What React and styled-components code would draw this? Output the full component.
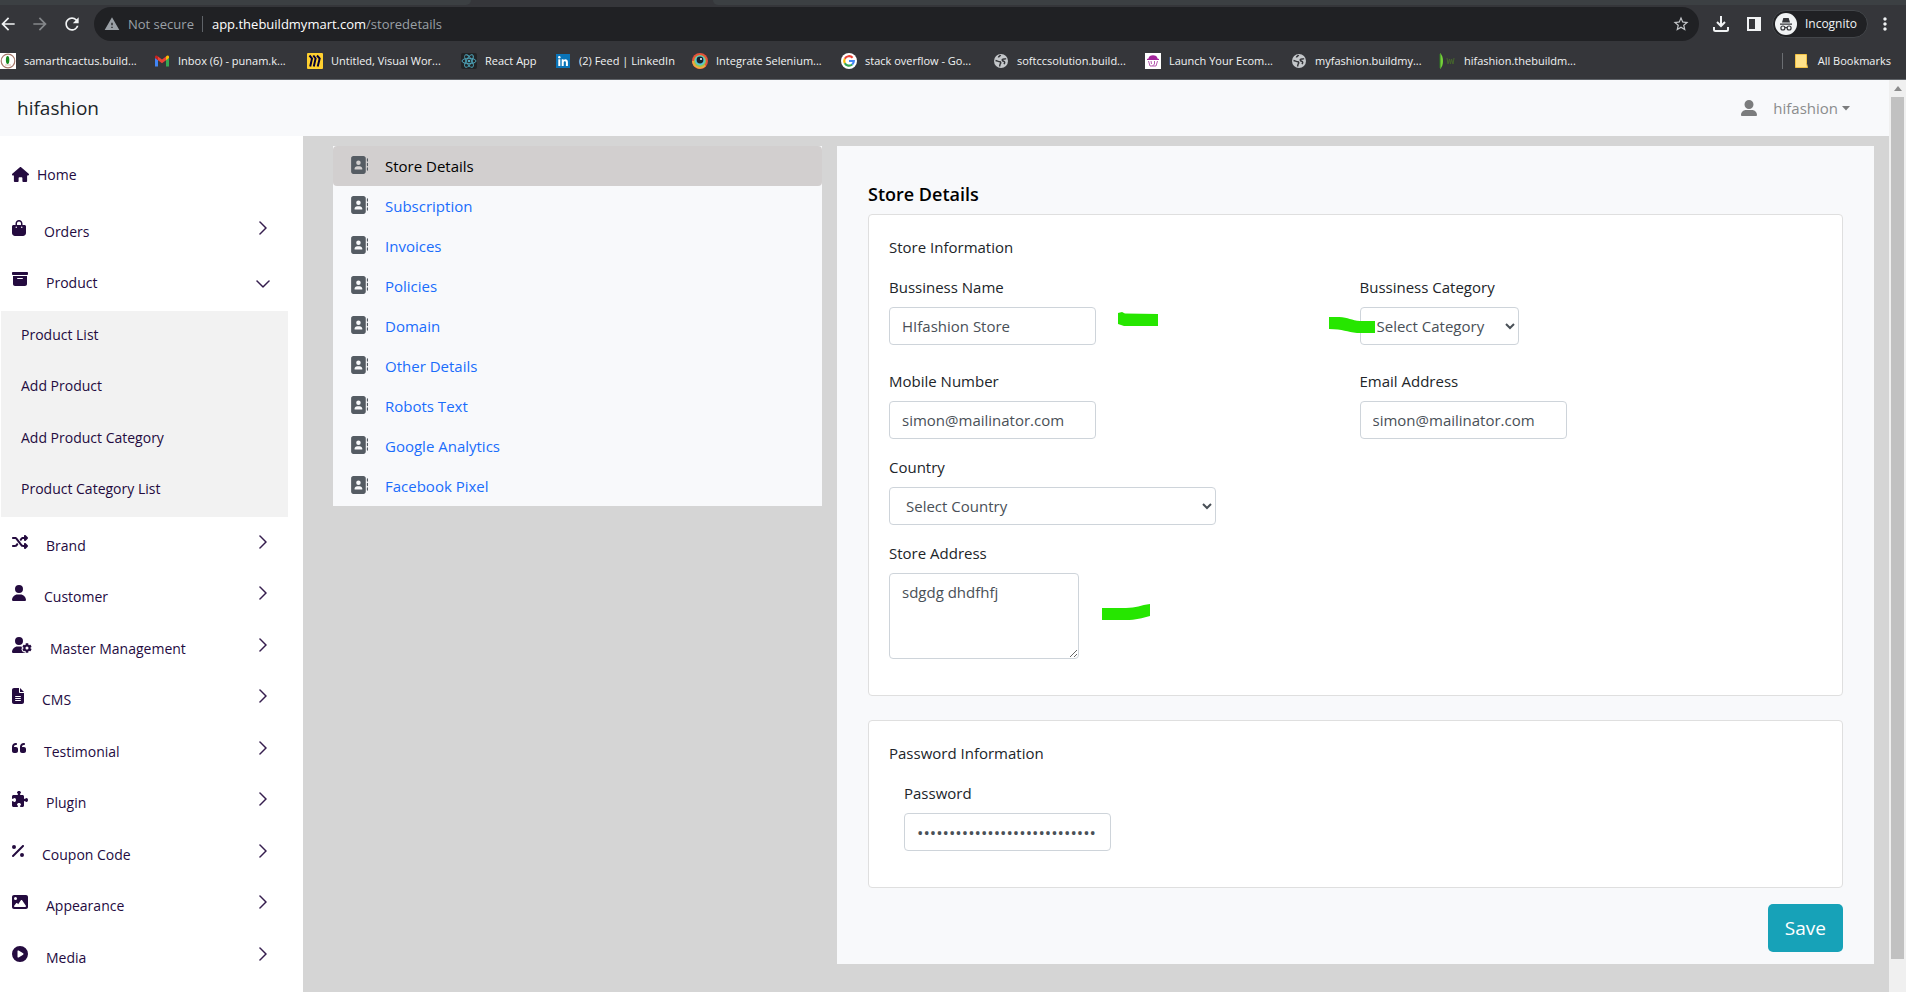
import * as React from 'react';
import styled, { createGlobalStyle } from 'styled-components';
import {
  FaAddressBook,
  FaBagShopping,
  FaBoxArchive,
  FaCirclePlay,
  FaFileLines,
  FaHouse,
  FaImage,
  FaPercent,
  FaPuzzlePiece,
  FaQuoteLeft,
  FaShuffle,
  FaUser,
  FaUserGear,
  FaUserLarge,
} from 'react-icons/fa6';
import { BsChevronDown, BsChevronRight } from 'react-icons/bs';
import {
  MdArrowBack,
  MdArrowForward,
  MdMoreVert,
  MdPublic,
  MdRefresh,
  MdStarBorder,
  MdWarning,
} from 'react-icons/md';

const GlobalStyle = createGlobalStyle`
  *, *::before, *::after {
    box-sizing: border-box;
  }

  body {
    margin: 0;
    font-family: 'Open Sans', 'Noto Sans', sans-serif;
    font-size: 15px;
    line-height: 24px;
    color: #212529;
    background: #d5d5d5;
  }

  button, input, select, textarea {
    font: inherit;
  }

  a {
    text-decoration: none;
  }

  svg {
    display: block;
    flex: none;
  }
`;

const Window = styled.div`
  display: flex;
  flex-direction: column;
  min-height: 100vh;
`;

/* ---- browser bars ---- */

const TabStrip = styled.div`
  display: flex;
  justify-content: space-between;
  height: 5px;
  background: #35363a;
`;

const TabEdge = styled.div`
  flex: ${p => p.$grow} 1 0;
  background: #3c4043;
  border-radius: ${p => (p.$left ? '0 0 6px 0' : '0 0 0 6px')};
`;

const ActiveTab = styled.div`
  flex: 242 1 0;
`;

const Toolbar = styled.div`
  display: flex;
  align-items: center;
  height: 42px;
  padding: 0 8px 4px 0;
  background: #35363a;
  color: #f1f3f4;
`;

const ToolButton = styled.button`
  display: flex;
  align-items: center;
  justify-content: center;
  flex: none;
  width: ${p => p.$width || 32}px;
  height: 32px;
  padding: 0;
  border: 0;
  background: none;
  color: ${p => (p.$dim ? '#85888b' : '#f1f3f4')};
`;

const NavButtons = styled.div`
  display: flex;
  margin-left: -8px;
  width: 102px;
`;

const AddressBar = styled.div`
  display: flex;
  align-items: center;
  flex: 1;
  height: 34px;
  padding: 0 2px 0 10px;
  border-radius: 17px;
  background: #202124;
  font-size: 13px;
  color: #9aa0a6;
`;

const SecurityText = styled.span`
  margin-left: 8px;
  padding-right: 8px;
  border-right: 1px solid #5f6368;
  line-height: 16px;
`;

const Url = styled.span`
  flex: 1;
  margin-left: 9px;
`;

const Host = styled.span`
  color: #fff;
`;

const Incognito = styled.button`
  display: flex;
  align-items: center;
  gap: 8px;
  height: 28px;
  margin: 0 4px 0 7px;
  padding: 0 10px 0 2px;
  border: 1px solid #43464a;
  border-radius: 14px;
  background: #202124;
  color: #f1f3f4;
  font-size: 12px;
`;

const BookmarkBar = styled.nav`
  display: flex;
  align-items: center;
  gap: 16px;
  height: 33px;
  padding: 0 15px 4px 0;
  border-bottom: 1px solid #5f6368;
  background: #35363a;
`;

const Bookmark = styled.a`
  display: flex;
  align-items: center;
  gap: 8px;
  min-width: ${p => p.$width || 0}px;
  font-size: 11px;
  white-space: nowrap;
  color: #f1f3f4;
`;

const AllBookmarks = styled(Bookmark)`
  gap: 10px;
  margin-left: auto;
  padding-left: 12px;
  border-left: 1px solid #6b6e72;
  line-height: 16px;
`;

/* ---- page frame ---- */

const Viewport = styled.div`
  display: flex;
  flex: 1;
`;

const Page = styled.div`
  display: flex;
  flex-direction: column;
  flex: 1;
  min-width: 0;
`;

const ScrollTrack = styled.div`
  display: flex;
  flex-direction: column;
  align-items: center;
  width: 17px;
  background: #f0f0f0;

  &::after {
    content: '';
    flex: 33 1 0;
  }
`;

const ScrollArrow = styled.div`
  display: flex;
  align-items: center;
  height: 17px;
`;

const ScrollThumb = styled.div`
  flex: 862 1 0;
  width: 13px;
  background: #c1c1c1;
`;

const Header = styled.header`
  display: flex;
  align-items: center;
  justify-content: space-between;
  height: 56px;
  padding: 0 39px 0 17px;
  background: #f8f9fb;
`;

const BrandLink = styled.a`
  font-size: 19px;
  color: #212529;
`;

const UserMenu = styled.button`
  display: flex;
  align-items: center;
  padding: 0;
  border: 0;
  background: none;
  color: #7b7c7d;
`;

const UserName = styled.span`
  margin: 0 4px 0 16px;
  color: #8b8c8d;
`;

const Body = styled.div`
  display: flex;
  flex: 1;
`;

/* ---- sidebar ---- */

const Sidebar = styled.nav`
  flex: none;
  width: 303px;
  padding: 10px 15px 0 1px;
  background: #fff;
  font-size: 14px;
`;

const Menu = styled.ul`
  margin: 0;
  padding: 0;
  list-style: none;
`;

const MenuRow = styled.a`
  display: flex;
  align-items: center;
  height: 51px;
  padding: 0 17px 2px 11px;
  color: #240b3f;

  li:nth-child(even) > & {
    height: 52px;
  }
`;

const HomeRow = styled(MenuRow)`
  gap: 8px;
  height: 57px;
  padding-bottom: 0;
`;

// Font Awesome glyphs differ in width, only the height is shared
const MenuIcon = styled.span`
  width: ${p => p.$width}px;

  svg {
    width: 100%;
    height: 16px;
  }
`;

const MenuText = styled.span`
  flex: 1;
  margin-left: 18px;
  padding-top: 8px;
`;

const OpenChevron = styled(BsChevronDown)`
  align-self: flex-end;
  margin-bottom: 12px;
`;

const Submenu = styled(Menu)`
  margin-top: 5px;
  background: #f2f2f2;
`;

const SubmenuRow = styled(MenuRow)`
  padding: 0 16px 4px 20px;
`;

/* ---- settings ---- */

const Main = styled.main`
  display: grid;
  grid-template-columns: 489fr 1037fr;
  gap: 15px;
  align-items: start;
  flex: 1;
  padding: 10px 15px 28px 30px;
  background: #d5d5d5;
`;

const SettingsNav = styled.nav`
  background: #f8f9fb;
`;

const SettingsLink = styled.a`
  display: flex;
  align-items: center;
  gap: 17px;
  height: 40px;
  padding: 0 17px;
  border-radius: 4px;
  background: ${p => (p.$active ? '#d2cfcf' : 'none')};
  color: ${p => (p.$active ? '#000' : '#1a6dfb')};

  svg {
    margin-bottom: 2px;
    color: #555c63;
  }
`;

const Panel = styled.form`
  padding: 36px 31px 12px;
  background: #f8f9fb;
`;

const Title = styled.h1`
  margin: 0 0 8px;
  font-size: 18px;
  font-weight: 600;
  line-height: 24px;
  color: #000;
`;

const Card = styled.section`
  margin-bottom: ${p => (p.$last ? 16 : 24)}px;
  padding: 20px;
  border: 1px solid #dfdfdf;
  border-radius: 4px;
  background: #fff;
`;

const CardTitle = styled.h2`
  margin: 0 0 16px;
  font-size: 15px;
  font-weight: 400;
  line-height: 24px;
`;

const FieldRow = styled.div`
  display: grid;
  grid-template-columns: 1fr 1fr;
  gap: 8px;
  margin-bottom: ${p => (p.$loose ? 24 : 16)}px;
  padding-left: ${p => (p.$inset ? 15 : 0)}px;
`;

const Field = styled.div`
  display: flex;
  flex-direction: column;
  align-items: flex-start;
  gap: 8px;
`;

const Control = styled.div`
  position: relative;
  display: flex;
`;

const Input = styled.input`
  width: ${p => p.$width || 207}px;
  height: 38px;
  padding: 6px 12px;
  border: 1px solid #ced4da;
  border-radius: 4px;
  background: #fff;
  color: #495057;

  &[type='password'] {
    font-size: 17px;
  }
`;

const Select = styled(Input).attrs({ as: 'select' })``;

const TextArea = styled(Input).attrs({ as: 'textarea' })`
  height: 86px;
`;

/* highlighter strokes laid over the form */
const Marker = styled.svg`
  position: absolute;
  left: ${p => p.$left}px;
  top: ${p => p.$top}px;
  fill: #26e600;
  pointer-events: none;
`;

const Actions = styled.div`
  display: flex;
  justify-content: flex-end;
`;

const SaveButton = styled.button`
  height: 48px;
  padding: 0 17px;
  border: 0;
  border-radius: 5px;
  background: #17a2b8;
  color: #fff;
  font-size: 19px;
`;

/* ---- favicons ---- */

const CactusIcon = () => (
  <svg width="16" height="16" viewBox="0 0 16 16">
    <path fill="#fff" d="M0 0h16v16H0z" />
    <circle cx="8" cy="8" r="6.8" fill="#fff" stroke="#a5796b" strokeWidth="1.2" />
    <ellipse cx="7.6" cy="7" rx="1.7" ry="4" fill="#188a20" />
    <path d="M5 12h6" stroke="#d9b8ad" />
  </svg>
);

const GmailIcon = () => (
  <svg width="16" height="16" viewBox="0 0 16 16">
    <path fill="#4285f4" d="M1 13.5h3V7L1 4.7z" />
    <path fill="#34a853" d="M12 13.5h3V4.7L12 7z" />
    <path fill="#ea4335" d="M4 3.4l4 3 4-3V7.2l-4 3-4-3z" />
    <path fill="#c5221f" d="M1 4c0-1.6 1.7-2 3-.6v3.8L1 5z" />
    <path fill="#fbbc04" d="M15 4c0-1.6-1.7-2-3-.6v3.8L15 5z" />
  </svg>
);

const MiroIcon = () => (
  <svg width="16" height="16" viewBox="0 0 16 16">
    <rect width="16" height="16" rx="1" fill="#ffd02f" />
    <path
      d="M2.5 2.5L5 5.5 3.2 13.5M6.3 2.5L8.6 5.5 6.8 13.5M10 2.5l2.7 3-2 8"
      fill="none"
      stroke="#050038"
      strokeWidth="2"
    />
  </svg>
);

const ReactIcon = () => (
  <svg width="16" height="16" viewBox="0 0 16 16">
    <rect width="16" height="16" rx="2" fill="#222426" />
    <g fill="none" stroke="#4fa9bf" strokeWidth="0.9">
      <ellipse cx="8" cy="8" rx="7" ry="2.7" />
      <ellipse cx="8" cy="8" rx="7" ry="2.7" transform="rotate(60 8 8)" />
      <ellipse cx="8" cy="8" rx="7" ry="2.7" transform="rotate(120 8 8)" />
    </g>
    <circle cx="8" cy="8" r="1.3" fill="#4fa9bf" />
  </svg>
);

const LinkedInIcon = () => (
  <svg width="16" height="16" viewBox="0 0 16 16">
    <path fill="#0a74b8" d="M1 1h14v14H1z" />
    <circle cx="4.3" cy="4.2" r="1.2" fill="#fff" />
    <path fill="#fff" d="M3.3 6.3h2V13h-2zM6.7 6.3h1.9v1c1-1.7 4.3-1.6 4.3 1.6V13h-2V9.6c0-2-2.2-1.8-2.2 0V13h-2z" />
  </svg>
);

const SeleniumIcon = () => (
  <svg width="16" height="16" viewBox="0 0 16 16">
    <circle cx="8" cy="8" r="8" fill="#e5533c" />
    <path fill="#f2a541" d="M0 8a8 8 0 0014 5L8 8z" />
    <circle cx="8" cy="8" r="6" fill="#9ac54b" />
    <circle cx="8" cy="7.5" r="5" fill="#58c3d6" />
    <circle cx="8" cy="7" r="3.4" fill="#15202b" />
    <circle cx="9" cy="6" r="1" fill="#fff" />
  </svg>
);

const GoogleIcon = () => (
  <svg width="16" height="16" viewBox="0 0 16 16">
    <circle cx="8" cy="8" r="8" fill="#fff" />
    <g fill="none" strokeWidth="2.2">
      <path stroke="#ea4335" d="M11.6 4.8A4.8 4.8 0 003.8 5.8" />
      <path stroke="#fbbc04" d="M3.8 5.8a4.8 4.8 0 000 4.5" />
      <path stroke="#34a853" d="M3.8 10.2a4.8 4.8 0 007.4 1.3" />
      <path stroke="#4285f4" d="M11.2 11.5A4.8 4.8 0 0012.8 8H8" />
    </g>
  </svg>
);

// world map disc, land masses punched out of the light circle
const GlobeIcon = () => (
  <svg width="16" height="16" viewBox="0 0 16 16">
    <circle cx="8" cy="8" r="7" fill="#c4c7ca" />
    <path
      d="M2.500 7.500c2 .5 3 1 4.500 1.200.8.300 1 1.300.3 2-.5.600-.3 1.800-.8 2.800M13 5.500c-1 1-2.500 0-3.500.800-.8.700.2 1.700 1.200 1.900 1.500.300 1 1.800.3 3M7.500 2c-.3 1.200-1.800 1.200-2 2.500"
      fill="none"
      stroke="#35363a"
      strokeWidth="1.500"
    />
  </svg>
);

const LaunchIcon = () => (
  <svg width="16" height="16" viewBox="0 0 16 16">
    <path fill="#fff" d="M0 0h16v16H0z" />
    <path fill="#a3259c" d="M3.500 5.500C3.500 1 12.500 1 12.500 5.500l1.500.5v1H2V6z" />
    <path d="M3.500 8l1.500 5h6l1.500-5M6 8l.5 3M9.500 8v3l-2 2" fill="none" stroke="#b659b0" />
  </svg>
);

const LeafIcon = () => (
  <svg width="17" height="16" viewBox="0 0 17 16">
    <path fill="#76d13a" d="M1 0C5 3 5 13 1 16z" />
    <path fill="#2f7a22" d="M.5 1h1v14h-1z" />
    <path d="M8 5l1 6 1.500-5 1 5 1-5 1.500 5 1-6" fill="none" stroke="#45652c" />
  </svg>
);

const FolderIcon = () => (
  <svg width="13" height="14" viewBox="0 0 13 14">
    <path fill="#ffe28a" stroke="#f3c244" d="M.5.5h11v9l1 4H.5z" />
  </svg>
);

const DownloadIcon = () => (
  <svg width="16" height="16" viewBox="0 0 16 16">
    <path
      d="M8 0v9.500M4 6l4 4 4-4M1 11v2.500C1 14.500 1.500 15 2.500 15h11c1 0 1.500-.5 1.500-1.500V11"
      fill="none"
      stroke="#f1f3f4"
      strokeWidth="2"
    />
  </svg>
);

const SidePanelIcon = () => (
  <svg width="14" height="14" viewBox="0 0 14 14">
    <path fill="#f1f3f4" fillRule="evenodd" d="M0 0h14v14H0zM2 2v10h6V2z" />
  </svg>
);

const IncognitoIcon = () => (
  <svg width="22" height="22" viewBox="0 0 22 22">
    <circle cx="11" cy="11" r="11" fill="#f1f3f4" />
    <path fill="#35363a" d="M8.300 5h5.400l1.300 4.500H7zM5 10.500h12v1.300H5z" />
    <g fill="none" stroke="#35363a" strokeWidth="1.200">
      <circle cx="7.900" cy="15" r="2" />
      <circle cx="14.100" cy="15" r="2" />
      <path d="M9.900 14.700c.8-.5 1.400-.5 2.200 0" />
    </g>
  </svg>
);

const bookmarks = [
  { label: 'samarthcactus.build...', icon: <CactusIcon />, width: 138 },
  { label: 'Inbox (6) - punam.k...', icon: <GmailIcon />, width: 137 },
  { label: 'Untitled, Visual Wor...', icon: <MiroIcon />, width: 138 },
  { label: 'React App', icon: <ReactIcon />, width: 78 },
  { label: '(2) Feed | LinkedIn', icon: <LinkedInIcon />, width: 121 },
  { label: 'Integrate Selenium...', icon: <SeleniumIcon />, width: 133 },
  { label: 'stack overflow - Go...', icon: <GoogleIcon />, width: 136 },
  { label: 'softccsolution.build...', icon: <GlobeIcon />, width: 136 },
  { label: 'Launch Your Ecom...', icon: <LaunchIcon />, width: 130 },
  { label: 'myfashion.buildmy...', icon: <GlobeIcon />, width: 132 },
  { label: 'hifashion.thebuildm...', icon: <LeafIcon /> },
];

const productLinks = [
  'Product List',
  'Add Product',
  'Add Product Category',
  'Product Category List',
];

const menuItems = [
  { label: 'Brand', Icon: FaShuffle, width: 16 },
  { label: 'Customer', Icon: FaUser, width: 14 },
  { label: 'Master Management', Icon: FaUserGear, width: 20 },
  { label: 'CMS', Icon: FaFileLines, width: 12 },
  { label: 'Testimonial', Icon: FaQuoteLeft, width: 14 },
  { label: 'Plugin', Icon: FaPuzzlePiece, width: 16 },
  { label: 'Coupon Code', Icon: FaPercent, width: 12 },
  { label: 'Appearance', Icon: FaImage, width: 16 },
  { label: 'Media', Icon: FaCirclePlay, width: 16 },
];

const settingsLinks = [
  'Store Details',
  'Subscription',
  'Invoices',
  'Policies',
  'Domain',
  'Other Details',
  'Robots Text',
  'Google Analytics',
  'Facebook Pixel',
];

const MenuItem = ({ label, Icon, width, open, children }) => (
  <li>
    <MenuRow href="#">
      <MenuIcon $width={width}>
        <Icon />
      </MenuIcon>
      <MenuText>{label}</MenuText>
      {open ? (
        <OpenChevron size={16} strokeWidth="0.5" />
      ) : (
        <BsChevronRight size={16} strokeWidth="0.5" />
      )}
    </MenuRow>
    {children}
  </li>
);

const Browser = () => (
  <>
    <TabStrip>
      <TabEdge $left $grow={471} />
      <ActiveTab />
      <TabEdge $grow={1193} />
    </TabStrip>
    <Toolbar>
      <NavButtons>
        <ToolButton aria-label="Back">
          <MdArrowBack size={20} />
        </ToolButton>
        <ToolButton aria-label="Forward" $dim>
          <MdArrowForward size={20} />
        </ToolButton>
        <ToolButton aria-label="Reload">
          <MdRefresh size={20} />
        </ToolButton>
      </NavButtons>
      <AddressBar>
        <MdWarning size={16} />
        <SecurityText>Not secure</SecurityText>
        <Url>
          <Host>app.thebuildmymart.com</Host>/storedetails
        </Url>
        <ToolButton aria-label="Bookmark this tab">
          <MdStarBorder size={18} color="#c4c7ca" />
        </ToolButton>
      </AddressBar>
      <ToolButton aria-label="Downloads" $width={44}>
        <DownloadIcon />
      </ToolButton>
      <ToolButton aria-label="Side panel" $width={22}>
        <SidePanelIcon />
      </ToolButton>
      <Incognito>
        <IncognitoIcon />
        Incognito
      </Incognito>
      <ToolButton aria-label="More" $width={26}>
        <MdMoreVert size={20} />
      </ToolButton>
    </Toolbar>
    <BookmarkBar>
      {bookmarks.map(b => (
        <Bookmark key={b.label} href="#" $width={b.width}>
          {b.icon}
          {b.label}
        </Bookmark>
      ))}
      <AllBookmarks href="#">
        <FolderIcon />
        All Bookmarks
      </AllBookmarks>
    </BookmarkBar>
  </>
);

const StoreForm = () => (
  <Panel>
    <Title>Store Details</Title>
    <Card>
      <CardTitle>Store Information</CardTitle>
      <FieldRow $loose>
        <Field>
          <label htmlFor="name">Bussiness Name</label>
          <Control>
            <Input id="name" defaultValue="HIfashion Store" />
            <Marker $left={229} $top={5} width="40" height="14">
              <path d="M0 1l4-1 3 1.500 33 .5v12H6L0 12z" />
            </Marker>
          </Control>
        </Field>
        <Field>
          <label htmlFor="category">Bussiness Category</label>
          <Control>
            <Select id="category" $width={159}>
              <option>Select Category</option>
            </Select>
            <Marker $left={-31} $top={10} width="46" height="16">
              <path d="M0 0c18-1 20 3 31 4h15v12H28C18 15 14 12 0 12z" />
            </Marker>
          </Control>
        </Field>
      </FieldRow>
      <FieldRow>
        <Field>
          <label htmlFor="mobile">Mobile Number</label>
          <Input id="mobile" defaultValue="simon@mailinator.com" />
        </Field>
        <Field>
          <label htmlFor="email">Email Address</label>
          <Input id="email" defaultValue="simon@mailinator.com" />
        </Field>
      </FieldRow>
      <FieldRow>
        <Field>
          <label htmlFor="country">Country</label>
          <Select id="country" $width={327}>
            <option>Select Country</option>
          </Select>
        </Field>
      </FieldRow>
      <FieldRow>
        <Field>
          <label htmlFor="address">Store Address</label>
          <Control>
            <TextArea id="address" $width={190} defaultValue="sdgdg dhdfhfj" />
            <Marker $left={213} $top={31} width="48" height="16">
              <path d="M0 4h24C34 4 39 1 48 0v12c-8 2-14 4-24 4H0z" />
            </Marker>
          </Control>
        </Field>
      </FieldRow>
    </Card>
    <Card $last>
      <CardTitle>Password Information</CardTitle>
      <FieldRow $inset>
        <Field>
          <label htmlFor="password">Password</label>
          <Input
            id="password"
            type="password"
            autoComplete="off"
            defaultValue="abcdefghijklmnopqrstuvwxyz12"
          />
        </Field>
      </FieldRow>
    </Card>
    <Actions>
      <SaveButton type="button">Save</SaveButton>
    </Actions>
  </Panel>
);

const App = () => (
  <Window>
    <GlobalStyle />
    <Browser />
    <Viewport>
      <Page>
        <Header>
          <BrandLink href="#">hifashion</BrandLink>
          <UserMenu>
            <FaUserLarge size={16} />
            <UserName>hifashion</UserName>
            <svg width="8" height="5" viewBox="0 0 8 5">
              <path fill="currentColor" d="M0 0h8L4 4.500z" />
            </svg>
          </UserMenu>
        </Header>
        <Body>
          <Sidebar>
            <HomeRow href="#">
              <FaHouse size={17} />
              Home
            </HomeRow>
            <Menu>
              <MenuItem label="Orders" Icon={FaBagShopping} width={14} />
              <MenuItem label="Product" Icon={FaBoxArchive} width={16} open>
                <Submenu>
                  {productLinks.map(label => (
                    <li key={label}>
                      <SubmenuRow href="#">{label}</SubmenuRow>
                    </li>
                  ))}
                </Submenu>
              </MenuItem>
            </Menu>
            <Menu>
              {menuItems.map(item => (
                <MenuItem key={item.label} {...item} />
              ))}
            </Menu>
          </Sidebar>
          <Main>
            <SettingsNav>
              {settingsLinks.map((label, i) => (
                <SettingsLink key={label} href="#" $active={i === 0}>
                  <FaAddressBook size={18} />
                  {label}
                </SettingsLink>
              ))}
            </SettingsNav>
            <StoreForm />
          </Main>
        </Body>
      </Page>
      <ScrollTrack>
        <ScrollArrow>
          <svg width="8" height="5" viewBox="0 0 8 5">
            <path fill="#8b8b8b" d="M0 5h8L4 0z" />
          </svg>
        </ScrollArrow>
        <ScrollThumb />
      </ScrollTrack>
    </Viewport>
  </Window>
);

export default App;
